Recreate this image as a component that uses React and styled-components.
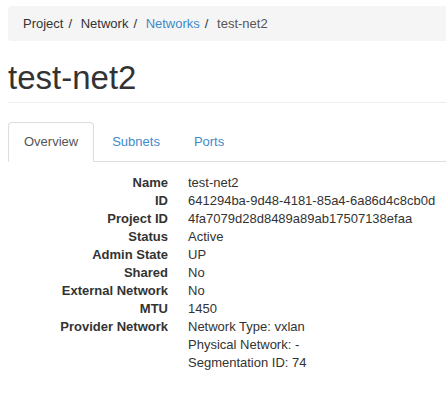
import React from 'react';
import styled, { createGlobalStyle } from 'styled-components';

const GlobalStyle = createGlobalStyle`
	html, body {
		margin: 0;
		padding: 0;
		overflow: hidden;
		background: #fff;
	}
	body {
		font-family: 'Liberation Sans', Arial, sans-serif;
		font-size: 13px;
		color: #333;
	}
`;

const crumbs = [
	{ label: 'Project' },
	{ label: 'Network' },
	{ label: 'Networks', link: true },
	{ label: 'test-net2', active: true },
];

const tabs = [
	{ label: 'Overview', active: true },
	{ label: 'Subnets' },
	{ label: 'Ports' },
];

const details = [
	['Name', ['test-net2']],
	['ID', ['641294ba-9d48-4181-85a4-6a86d4c8cb0d']],
	['Project ID', ['4fa7079d28d8489a89ab17507138efaa']],
	['Status', ['Active']],
	['Admin State', ['UP']],
	['Shared', ['No']],
	['External Network', ['No']],
	['MTU', ['1450']],
	[
		'Provider Network',
		['Network Type: vxlan', 'Physical Network: -', 'Segmentation ID: 74'],
	],
];

const App = () => {
	return (
		<StylePage>
			<GlobalStyle />
			<StyleBreadcrumb>
				{crumbs.map((c, i) => (
					<StyleCrumb key={c.label} $first={i === 0}>
						{c.link ? (
							<StyleLink href='#'>{c.label}</StyleLink>
						) : (
							<StyleCrumbText $active={c.active}>{c.label}</StyleCrumbText>
						)}
					</StyleCrumb>
				))}
			</StyleBreadcrumb>
			<StyleHeader>
				<h1>test-net2</h1>
			</StyleHeader>
			<StyleTabs>
				{tabs.map((t) => (
					<StyleTab key={t.label} $active={t.active}>
						<a href='#'>{t.label}</a>
					</StyleTab>
				))}
			</StyleTabs>
			<StyleDetails>
				{details.map(([label, values]) => (
					<React.Fragment key={label}>
						<dt>{label}</dt>
						<dd>
							{values.map((v) => (
								<div key={v}>{v}</div>
							))}
						</dd>
					</React.Fragment>
				))}
			</StyleDetails>
		</StylePage>
	);
};

const StylePage = styled.div`
	padding: 6px 0 0 8px;
`;

// the page is cut at the right, so the bar runs off the edge
const StyleBreadcrumb = styled.ol`
	display: flex;
	list-style: none;
	margin: 0;
	padding: 8px 15px;
	line-height: 19px;
	background: #f5f5f5;
	border-radius: 4px 0 0 4px;
`;

const StyleCrumb = styled.li`
	display: flex;
	&::before {
		content: ${(p) => (p.$first ? 'none' : '"/\\00a0"')};
		padding: 0 5px;
		color: #333;
	}
`;

const StyleCrumbText = styled.span`
	color: ${(p) => (p.$active ? '#555' : '#333')};
`;

const StyleLink = styled.a`
	color: #428bca;
	text-decoration: none;
`;

const StyleHeader = styled.div`
	margin: 19px 0 19px;
	padding-bottom: 6px;
	border-bottom: 1px solid #eee;
	h1 {
		margin: 0;
		font-size: 33px;
		line-height: 36px;
		font-weight: 500;
		color: #333;
	}
`;

const StyleTabs = styled.ul`
	display: flex;
	list-style: none;
	margin: 0;
	padding: 0;
	border-bottom: 1px solid #ddd;
`;

const StyleTab = styled.li`
	margin-bottom: -1px;
	a {
		display: block;
		margin-right: 2px;
		padding: 10px 15px;
		line-height: 18px;
		text-decoration: none;
		border: 1px solid transparent;
		border-radius: 4px 4px 0 0;
		color: ${(p) => (p.$active ? '#555' : '#428bca')};
		background: ${(p) => (p.$active ? '#fff' : 'transparent')};
		border-color: ${(p) => (p.$active ? '#ddd #ddd transparent' : 'transparent')};
	}
`;

const StyleDetails = styled.dl`
	display: grid;
	grid-template-columns: 160px 1fr;
	column-gap: 20px;
	margin: 12px 0 0;
	line-height: 18px;
	dt {
		font-weight: bold;
		text-align: right;
		white-space: nowrap;
		overflow: hidden;
		text-overflow: ellipsis;
	}
	dd {
		margin: 0;
	}
`;

export default App;
